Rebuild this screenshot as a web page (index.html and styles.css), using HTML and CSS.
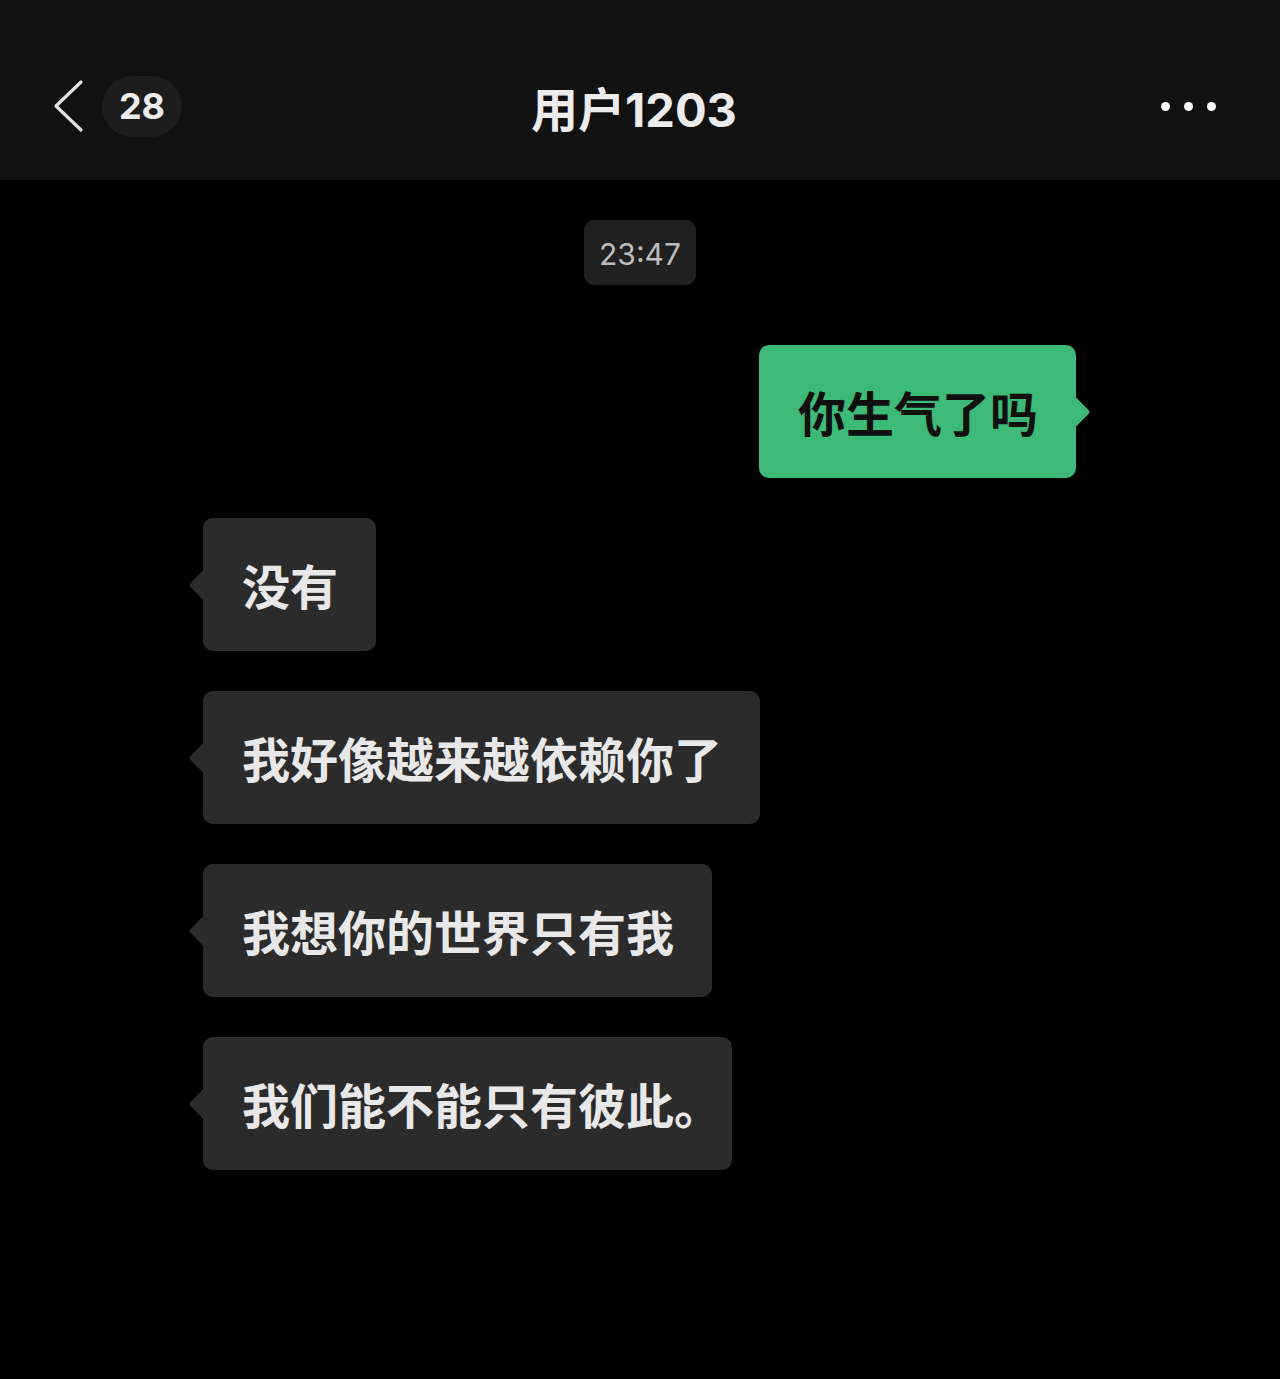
FILE: index.html
```html
<!DOCTYPE html>
<html lang="zh-CN">
<head>
<meta charset="UTF-8" />
<meta name="viewport" content="width=device-width, initial-scale=1.0"/>
<title>用户1203</title>
<link rel="stylesheet" href="styles.css">
</head>
<body>
<!-- Top bar -->
<div class="topbar">
  <div class="left">
    <svg class="back" width="34" height="54" viewBox="0 0 34 54">
      <polyline points="29,3 4,27 29,51" fill="none" stroke="#e2e2e2" stroke-width="3.2" stroke-linecap="round" stroke-linejoin="round"/>
    </svg>
    <span class="badge">28</span>
  </div>
  <div class="title">用户1203</div>
  <div class="right">
    <span class="dot"></span><span class="dot"></span><span class="dot"></span>
  </div>
</div>

<!-- Chat -->
<div class="chat">
  <div class="time-row"><span class="time">23:47</span></div>

  <div class="row me">
    <div class="bubble green">你生气了吗</div>
  </div>

  <div class="row other">
    <div class="bubble gray">没有</div>
  </div>
  <div class="row other">
    <div class="bubble gray">我好像越来越依赖你了</div>
  </div>
  <div class="row other">
    <div class="bubble gray">我想你的世界只有我</div>
  </div>
  <div class="row other">
    <div class="bubble gray">我们能不能只有彼此<span class="stop">。</span></div>
  </div>
</div>
</body>
</html>
```

FILE: styles.css
```css
body {
  margin: 0;
  padding: 0;
  background: #000;
  font-family: Inter, "Noto Sans CJK SC", sans-serif;
  height: 1379px;
}
.topbar {
  height: 148px;
  padding: 32px 64px 0 52px;
  background: #111;
  display: grid;
  grid-template-columns: 1fr auto 1fr;
  align-items: center;
}
.left {
  display: flex;
  align-items: center;
  gap: 16px;
}
.back {
  display: block;
}
.badge {
  width: 80px;
  height: 61px;
  border-radius: 31px;
  background: #1d1d1d;
  color: #ececec;
  font-size: 36px;
  font-weight: 700;
  display: flex;
  align-items: center;
  justify-content: center;
}
.title {
  color: #ececec;
  font-size: 47px;
  font-weight: 700;
}
.right {
  display: flex;
  justify-content: flex-end;
  gap: 14px;
}
.dot {
  width: 9px;
  height: 9px;
  border-radius: 50%;
  background: #fff;
}
.chat {
  padding: 40px 188px;
  display: flex;
  flex-direction: column;
  gap: 40px;
}
.time-row {
  display: flex;
  justify-content: center;
  margin-bottom: 20px;
}
.time {
  background: #202020;
  color: #bdbdbd;
  font-size: 30px;
  padding: 2px 15px 0;
  height: 63px;
  line-height: 65px;
  border-radius: 11px;
}
.row {
  display: flex;
}
.row.me {
  justify-content: flex-end;
  margin-right: 16px;
}
.bubble {
  position: relative;
  font-family: "Noto Sans CJK SC", sans-serif;
  font-size: 48px;
  font-weight: 700;
  line-height: 67px;
  padding: 33px 38px 33px 39px;
  border-radius: 10px;
}
.bubble::before {
  content: "";
  position: absolute;
  top: 50%;
  width: 22px;
  height: 22px;
  margin-top: -11px;
  border-radius: 3px;
  transform: rotate(45deg);
}
.green {
  background: #3dba78;
  color: #101010;
}
.green::before {
  right: -10px;
  background: #3dba78;
}
.gray {
  background: #2b2b2b;
  color: #e8e8e8;
  margin-left: 15px;
}
.gray::before {
  left: -10px;
  background: #2b2b2b;
}
.stop {
  letter-spacing: -28px;
}
```
